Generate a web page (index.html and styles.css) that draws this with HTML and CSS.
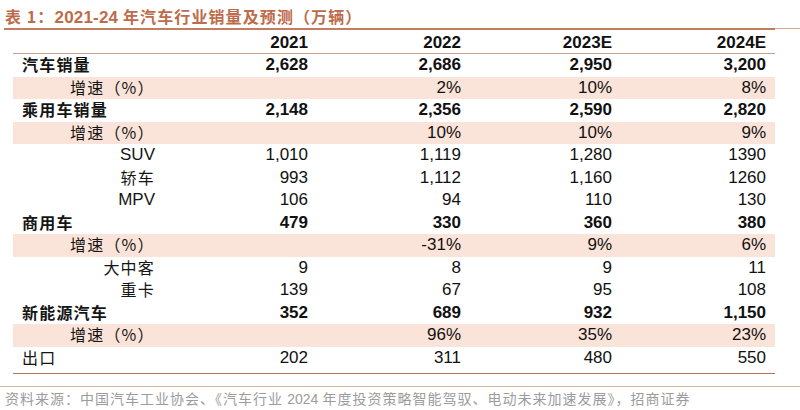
FILE: index.html
```html
<!DOCTYPE html>
<html lang="zh-CN">
<head>
<meta charset="utf-8">
<title>表 1：2021-24 年汽车行业销量及预测（万辆）</title>
<link rel="stylesheet" href="styles.css">
</head>
<body>
<div class="title-bar">
  <div class="title">表 1：<span class="num">2021-24</span> 年汽车行业销量及预测（万辆）</div>
  <div class="title-tail"></div>
</div>
<div class="table">
  <div class="row head">
    <div class="c lab"></div>
    <div class="c">2021</div>
    <div class="c">2022</div>
    <div class="c">2023E</div>
    <div class="c">2024E</div>
  </div>
  <div class="row bold">
    <div class="c lab main">汽车销量</div>
    <div class="c">2,628</div><div class="c">2,686</div><div class="c">2,950</div><div class="c">3,200</div>
  </div>
  <div class="row band">
    <div class="c lab growth">增速（%）</div>
    <div class="c"></div><div class="c">2%</div><div class="c">10%</div><div class="c">8%</div>
  </div>
  <div class="row bold">
    <div class="c lab main">乘用车销量</div>
    <div class="c">2,148</div><div class="c">2,356</div><div class="c">2,590</div><div class="c">2,820</div>
  </div>
  <div class="row band">
    <div class="c lab growth">增速（%）</div>
    <div class="c"></div><div class="c">10%</div><div class="c">10%</div><div class="c">9%</div>
  </div>
  <div class="row">
    <div class="c lab sub latin">SUV</div>
    <div class="c">1,010</div><div class="c">1,119</div><div class="c">1,280</div><div class="c">1390</div>
  </div>
  <div class="row">
    <div class="c lab sub">轿车</div>
    <div class="c">993</div><div class="c">1,112</div><div class="c">1,160</div><div class="c">1260</div>
  </div>
  <div class="row">
    <div class="c lab sub latin">MPV</div>
    <div class="c">106</div><div class="c">94</div><div class="c">110</div><div class="c">130</div>
  </div>
  <div class="row bold">
    <div class="c lab main">商用车</div>
    <div class="c">479</div><div class="c">330</div><div class="c">360</div><div class="c">380</div>
  </div>
  <div class="row band">
    <div class="c lab growth">增速（%）</div>
    <div class="c"></div><div class="c">-31%</div><div class="c">9%</div><div class="c">6%</div>
  </div>
  <div class="row">
    <div class="c lab sub">大中客</div>
    <div class="c">9</div><div class="c">8</div><div class="c">9</div><div class="c">11</div>
  </div>
  <div class="row">
    <div class="c lab sub">重卡</div>
    <div class="c">139</div><div class="c">67</div><div class="c">95</div><div class="c">108</div>
  </div>
  <div class="row bold">
    <div class="c lab main">新能源汽车</div>
    <div class="c">352</div><div class="c">689</div><div class="c">932</div><div class="c">1,150</div>
  </div>
  <div class="row band">
    <div class="c lab growth">增速（%）</div>
    <div class="c"></div><div class="c">96%</div><div class="c">35%</div><div class="c">23%</div>
  </div>
  <div class="row last">
    <div class="c lab main plain">出口</div>
    <div class="c">202</div><div class="c">311</div><div class="c">480</div><div class="c">550</div>
  </div>
</div>
<div class="source">资料来源：中国汽车工业协会、《汽车行业 <span class="num">2024</span> 年度投资策略智能驾驭、电动未来加速发展》，招商证券</div>
</body>
</html>
```

FILE: styles.css
```css
html, body {
  margin: 0;
  padding: 0;
  background: #ffffff;
}

body {
  width: 800px;
  height: 410px;
  overflow: hidden;
  font-family: "Liberation Sans", Arial, "Noto Sans CJK SC", sans-serif;
  color: #111111;
}

.title-bar {
  display: flex;
  align-items: flex-end;
  height: 30px;
}

.title {
  width: 771px;
  margin-left: 4px;
  padding-left: 1px;
  height: 28px;
  line-height: 28px;
  box-sizing: border-box;
  border-bottom: 2px solid #c47c5e;
  color: #bd6c4b;
  font-family: "Noto Sans CJK SC", sans-serif;
  font-weight: 700;
  font-size: 16px;
  letter-spacing: 1.1px;
  white-space: nowrap;
}

.title .num {
  font-family: "Liberation Sans", Arial, sans-serif;
  font-size: 17px;
  letter-spacing: 0.2px;
}

.title-tail {
  flex: 1;
  height: 1px;
  background: #d9a894;
  margin-bottom: 1px;
}

.table {
  width: 762px;
  margin-left: 13px;
  padding-bottom: 4px;
  border-bottom: 1px solid #b8735d;
}

.row {
  display: grid;
  grid-template-columns: 147px 157px 153px 151px 154px;
  height: 22.5px;
  font-size: 17px;
  line-height: 22.5px;
}

.row.head {
  height: 23px;
  line-height: 26px;
  border-bottom: 1px solid #c9a08f;
  font-weight: 700;
}

.row.bold {
  font-weight: 700;
}

.row.band {
  background: #fae3d8;
}

.c {
  text-align: right;
  padding-right: 9px;
  white-space: nowrap;
}

.lab {
  text-align: left;
  padding-right: 0;
  line-height: 20.5px;
  padding-bottom: 2px;
  font-family: "Noto Sans CJK SC", sans-serif;
  font-size: 16px;
  letter-spacing: 1.2px;
  color: #151515;
}

.lab.main {
  padding-left: 9px;
}

.lab.plain {
  font-weight: 400;
}

.lab.growth {
  padding-left: 57px;
  font-weight: 400;
}

.lab.sub {
  text-align: right;
  padding-right: 5px;
  font-weight: 400;
}

.lab.latin {
  font-family: "Liberation Sans", Arial, sans-serif;
  font-size: 17px;
  letter-spacing: 0;
  line-height: 22.5px;
  padding-bottom: 0;
}

.source {
  margin-top: 12px;
  border-top: 1px solid #dcb3a3;
  padding-left: 5px;
  padding-top: 2px;
  line-height: 18px;
  font-family: "Noto Sans CJK SC", sans-serif;
  font-size: 14px;
  letter-spacing: 1px;
  color: #9c9c9c;
  white-space: nowrap;
}

.source .num {
  font-family: "Liberation Sans", Arial, sans-serif;
  letter-spacing: 0;
}
```
